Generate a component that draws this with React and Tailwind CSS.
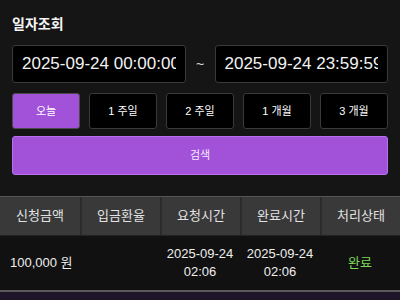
const RANGES = ['오늘', '1 주일', '2 주일', '1 개월', '3 개월'];
const COLUMNS = ['신청금액', '입금환율', '요청시간', '완료시간', '처리상태'];

function DateInput({ value }) {
  return (
    <input
      readOnly
      value={value}
      className="h-[38px] w-0 min-w-0 flex-1 rounded-[3px] border border-[#3a3a3a] bg-black px-[9px] text-[17px] text-[#f2f2f2] outline-none"
    />
  );
}

export default function App() {
  return (
    <div
      className="h-[300px] w-[400px] overflow-hidden bg-[#151515] text-white"
      style={{ fontFamily: '"Liberation Sans", "Noto Sans CJK KR", sans-serif' }}
    >
      <div className="px-3 pt-[14px]">
        <h2 className="text-[14px] leading-[20px] font-bold text-[#f5f5f5]">일자조회</h2>

        <div className="mt-[11px] flex items-center">
          <DateInput value="2025-09-24 00:00:00" />
          <span className="w-[29px] text-center text-[14px] text-[#ddd]">~</span>
          <DateInput value="2025-09-24 23:59:59" />
        </div>

        <div className="mt-[10px] grid grid-cols-5 gap-[9px]">
          {RANGES.map((label, i) => (
            <button
              key={label}
              className={
                i === 0
                  ? 'h-[36px] rounded-[3px] border border-[#4a4a4a] bg-[#a152d9] text-[11px] text-white'
                  : 'h-[36px] rounded-[3px] border border-[#3a3a3a] bg-black text-[11px] text-white'
              }
            >
              {label}
            </button>
          ))}
        </div>

        <button className="mt-[7px] h-[39px] w-full rounded-[3px] border border-[#b86ff0] bg-[#a152d9] text-[11px] text-[#f4e8ff]">
          검색
        </button>
      </div>

      <div className="mt-[21px] border-t border-[#555]">
        <div className="grid h-[38px] grid-cols-5 bg-[#393939]">
          {COLUMNS.map((col, i) => (
            <div
              key={col}
              className={
                i === 0
                  ? 'flex items-center justify-center text-[13px] text-[#e2e2e2]'
                  : 'flex items-center justify-center border-l-2 border-[#2c2c2c] text-[13px] text-[#e2e2e2]'
              }
            >
              {col}
            </div>
          ))}
        </div>
        <div className="grid h-[55px] grid-cols-5 border-t border-[#222] bg-[#111]">
          <div className="flex items-center pl-[10px] text-[13px] text-[#eee]">100,000 원</div>
          <div />
          <div className="flex flex-col items-center justify-center text-[13px] leading-[18px] text-[#eee]">
            <span>2025-09-24</span>
            <span>02:06</span>
          </div>
          <div className="flex flex-col items-center justify-center text-[13px] leading-[18px] text-[#eee]">
            <span>2025-09-24</span>
            <span>02:06</span>
          </div>
          <div className="flex items-center justify-center text-[13px] text-[#7fd858]">완료</div>
        </div>
        <div className="h-[2px] bg-[#5a5a5a]" />
        <div className="h-[20px] bg-[#1e1628]" />
      </div>
    </div>
  );
}
